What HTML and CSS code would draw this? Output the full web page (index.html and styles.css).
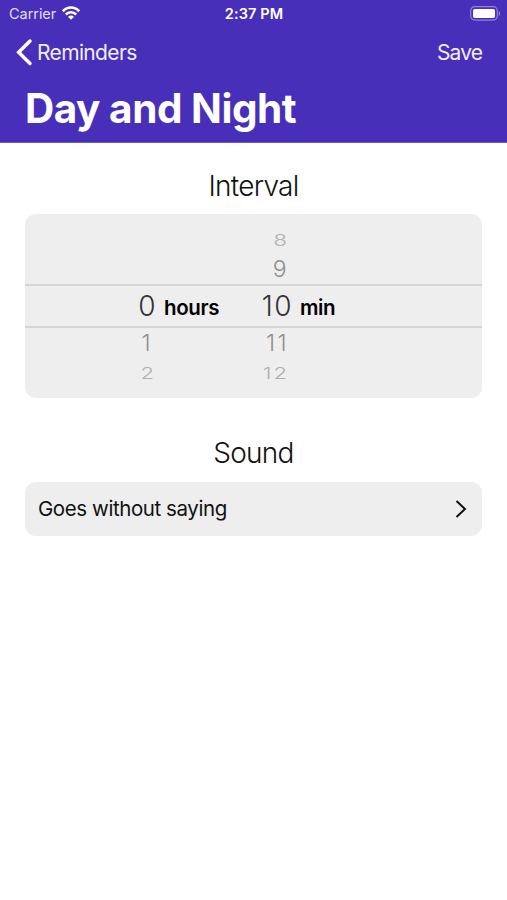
FILE: index.html
```html
<!DOCTYPE html>
<html lang="en">
<head>
<meta charset="utf-8">
<title>Day and Night</title>
<link rel="stylesheet" href="styles.css">
</head>
<body>
<header class="header">
  <div class="status">
    <div class="carrier"><span class="carrier-name">Carrier</span>
      <svg class="wifi" width="18" height="14" viewBox="0 0 18 14" fill="none" stroke="#fff" stroke-width="2.600"><path d="M.9 5.300C5.400.3 12.600.3 17.100 5.300M3.800 8.500c2.900-3 7.500-3 10.400 0"/><path d="M9 13.800 6 10.700c1.700-1.700 4.300-1.700 6 0z" fill="#fff" stroke="none"/></svg>
    </div>
    <div class="clock"><span class="clock-text">2:37 PM</span></div>
    <svg class="battery" width="31" height="15" viewBox="0 0 31 15"><rect x=".7" y=".7" width="26.600" height="13.400" rx="4" fill="none" stroke="#fff" stroke-opacity=".4" stroke-width="1.200"/><rect x="3" y="3" width="22" height="9" rx="1.800" fill="#fff"/><path d="M28.800 5v5c1.800-.8 1.800-4.200 0-5z" fill="#fff" fill-opacity=".45"/></svg>
  </div>
  <nav class="nav">
    <div class="back">
      <svg width="18" height="28" viewBox="0 0 18 28" fill="none" stroke="#fff" stroke-width="3.500" stroke-linecap="round"><path d="M15 3 3.700 14.300 15 25.500"/></svg>
      <span class="back-text">Reminders</span>
    </div>
    <span class="save">Save</span>
  </nav>
  <h1 class="title"><span class="title-text">Day and Night</span></h1>
</header>
<main class="main">
  <h2 class="heading interval">Interval</h2>
  <section class="picker">
    <div class="row far"><span></span><span></span><span class="num">8</span><span></span></div>
    <div class="row near"><span></span><span></span><span class="num">9</span><span></span></div>
    <div class="row selected"><span class="num">0</span><b class="unit">hours</b><span class="num">10</span><b class="unit">min</b></div>
    <div class="row near"><span class="num">1</span><span></span><span class="num">11</span><span></span></div>
    <div class="row far"><span class="num">2</span><span></span><span class="num">12</span><span></span></div>
  </section>
  <h2 class="heading sound">Sound</h2>
  <section class="choice">
    <span class="choice-text">Goes without saying</span>
    <svg width="14" height="20" viewBox="0 0 14 20" fill="none" stroke="#111" stroke-width="2"><path d="m2.500 2 8.500 8-8.500 8"/></svg>
  </section>
</main>
</body>
</html>
```
FILE: styles.css
```css
* { box-sizing: border-box; }
body { margin: 0; background: #fff; color: #111; font-family: Inter, "Liberation Sans", sans-serif; }
.header { height: 143px; background: #482fb9; color: #fff; border-bottom: 1px solid #6d5ac6; }
.status { height: 28px; display: grid; grid-template-columns: 1fr auto 1fr; align-items: center; padding: 0 6px 1px 9px; font-size: 14.500px; }
.carrier { display: flex; align-items: center; gap: 6px; color: #e3def5; letter-spacing: -0.05px; }
.wifi { margin-top: -2px; }
.clock { margin-left: -2px; font-weight: 600; letter-spacing: 0.1px; }
.battery { justify-self: end; margin-top: -1px; }
.nav { height: 48px; display: flex; align-items: center; justify-content: space-between; padding: 0 25px 0 15px; font-size: 21px; color: #f0edfb; }
.back { display: flex; align-items: center; gap: 4px; }
.back-text { letter-spacing: -0.65px; }
.save { letter-spacing: -0.9px; }
.title { margin: 0; padding-left: 25px; height: 66px; line-height: 66px; font-size: 40.500px; font-weight: 700; letter-spacing: -0.48px; }
.main { padding: 0 25px; }
.heading { margin: 0; text-align: center; font-size: 28px; font-weight: 300; line-height: 34px; letter-spacing: -0.75px; }
.interval { padding-top: 26px; height: 71px; }
.sound { padding-top: 38px; height: 84px; }
.picker { height: 184px; padding-top: 11px; background: #eee; border-radius: 11px; }
.row { display: grid; grid-template-columns: 131px 97px 39px 1fr; align-items: center; height: 30px; color: #333; }
.num { text-align: right; font-size: 28px; font-weight: 300; letter-spacing: 1.5px; margin-right: -1px; line-height: 30px; }
.selected { height: 44px; border-top: 2px solid #d5d5d5; border-bottom: 2px solid #d5d5d5; }
.unit { padding: 3px 0 0 8px; font-size: 20.500px; font-weight: 600; color: #000; letter-spacing: -0.35px; }
.near .num { font-size: 23px; font-weight: 300; padding-right: 5px; color: #8e8e8e; letter-spacing: 2.5px; margin-right: -2px; }
.far { height: 29px; }
.far .num { font-size: 22px; font-weight: 300; padding-right: 5px; color: #b0b0b0; letter-spacing: 2px; margin-right: -2px; transform: scaleY(.73); }
.far .num:first-child { padding-right: 2px; }
.choice { height: 54px; background: #eee; border-radius: 11px; display: flex; align-items: center; justify-content: space-between; padding: 0 14px 0 13px; }
.choice-text { font-size: 20.500px; letter-spacing: -0.42px; margin-top: -1px; }
```
